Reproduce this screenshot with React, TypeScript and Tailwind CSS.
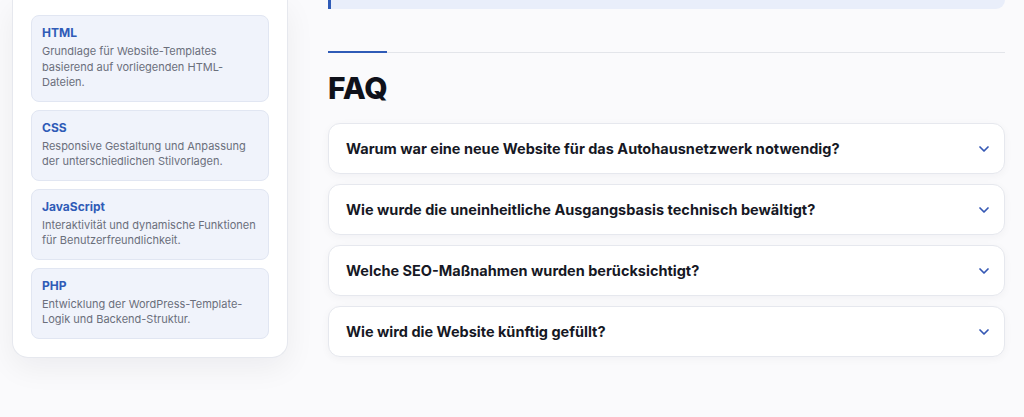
import { ChevronDown } from 'lucide-react'

const techs = [
  { name: 'HTML', text: 'Grundlage für Website-Templates basierend auf vorliegenden HTML-Dateien.' },
  { name: 'CSS', text: 'Responsive Gestaltung und Anpassung der unterschiedlichen Stilvorlagen.' },
  { name: 'JavaScript', text: 'Interaktivität und dynamische Funktionen für Benutzerfreundlichkeit.' },
  { name: 'PHP', text: 'Entwicklung der WordPress-Template-Logik und Backend-Struktur.' },
]

const faqs = [
  'Warum war eine neue Website für das Autohausnetzwerk notwendig?',
  'Wie wurde die uneinheitliche Ausgangsbasis technisch bewältigt?',
  'Welche SEO-Maßnahmen wurden berücksichtigt?',
  'Wie wird die Website künftig gefüllt?',
]

function App() {
  return (
    <div className="min-h-[417px] bg-[#fafafc] font-['Inter',sans-serif] overflow-hidden">
      <div className="flex gap-[40px] pl-[12px] pr-[19px]">
        {/* Tech stack sidebar (top cut off) */}
        <aside className="w-[276px] shrink-0 self-start bg-white border border-t-0 border-[#e6e8ee] rounded-b-2xl shadow-[0_10px_30px_rgba(15,23,42,0.06)] px-[18px] pt-[15px] pb-[18px] flex flex-col gap-[8px]">
          {techs.map((t) => (
            <div key={t.name} className="bg-[#f0f3fb] border border-[#e1e6f2] rounded-lg px-[10px] pt-[9px] pb-[10px]">
              <div className="text-[12px] leading-[16px] font-bold text-[#2f5bb7] mb-[3px]">{t.name}</div>
              <p className="text-[11px] leading-[15.5px] text-[#6b6f7b]">{t.text}</p>
            </div>
          ))}
        </aside>

        {/* Main column */}
        <main className="flex-1 flex flex-col">
          <div className="h-[9px] bg-[#e9eefa] border-l-[3px] border-[#2f5bb7] rounded-br-2xl" />

          <div className="mt-[43px] relative h-px bg-[#e3e5ea]">
            <div className="absolute left-0 top-[-1px] w-[59px] h-[2px] bg-[#2f5bb7]" />
          </div>

          <h2 className="mt-[17px] text-[30px] leading-[36px] font-extrabold text-[#0f111a] tracking-[-0.2px]">FAQ</h2>

          <div className="mt-[17px] flex flex-col gap-[10px]">
            {faqs.map((q) => (
              <div key={q} className="h-[51px] bg-white border border-[#e6e8ee] rounded-xl shadow-[0_2px_8px_rgba(15,23,42,0.04)] flex items-center justify-between pl-[17px] pr-[12px]">
                <span className="text-[14.5px] font-bold text-[#161824]">{q}</span>
                <ChevronDown className="w-[16px] h-[16px] text-[#3558b4]" strokeWidth={2.6} />
              </div>
            ))}
          </div>
        </main>
      </div>
    </div>
  )
}

export default App
